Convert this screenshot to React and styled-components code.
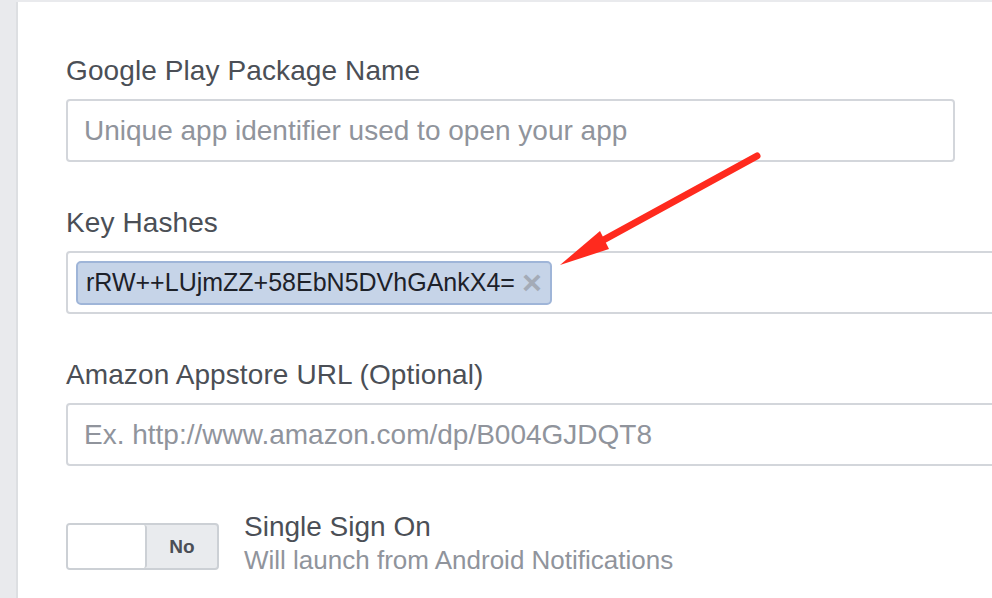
import React from "react";
import styled, { createGlobalStyle } from "styled-components";

const Global = createGlobalStyle`
  html, body { margin: 0; padding: 0; background: #e9eaed; overflow: hidden; }
  body { font-family: "Liberation Sans", Arial, sans-serif; }
  #root { width: 992px; height: 598px; overflow: hidden; }
`;

const Page = styled.div`
  display: flex;
  width: 992px;
  height: 598px;
  padding: 2px 0 0 16px;
  box-sizing: border-box;
`;

const Panel = styled.div`
  position: relative;
  flex: 1;
  background: #fff;
  border-left: 2px solid #dddfe2;
  padding: 52px 0 0 48px;
  overflow: hidden;
  display: flex;
  flex-direction: column;
  gap: 44px;
`;

const Field = styled.div`
  display: flex;
  flex-direction: column;
  gap: 11px;
`;

const Label = styled.div`
  font-size: 28px;
  line-height: 34px;
  color: #4b4f56;
  letter-spacing: 0.1px;
`;

const Input = styled.div`
  box-sizing: border-box;
  height: 63px;
  width: ${(p) => p.$w}px;
  border: 2px solid #d3d6db;
  border-radius: 4px;
  display: flex;
  align-items: center;
  padding: 0 16px;
  font-size: 28px;
  color: #90949c;
  white-space: nowrap;
`;

const TagInput = styled(Input)`
  padding: 0 8px;
`;

const Chip = styled.div`
  box-sizing: border-box;
  height: 44px;
  display: flex;
  align-items: center;
  gap: 7px;
  padding: 0 8px;
  background: #c6d4e8;
  border: 2px solid #9fb5d8;
  border-radius: 5px;
  font-size: 25px;
  color: #1d2129;
`;

const Remove = styled.span`
  color: #a4abb7;
  font-size: 34px;
  font-weight: bold;
  line-height: 1;
  margin-top: -2px;
`;

const ToggleRow = styled.div`
  display: flex;
  align-items: flex-start;
  gap: 25px;
`;

const Toggle = styled.div`
  margin-top: 13px;
  box-sizing: border-box;
  width: 153px;
  height: 47px;
  display: flex;
  border: 2px solid #ccd0d5;
  border-radius: 4px;
  overflow: hidden;
  background: #e9ebee;
`;

const Knob = styled.div`
  width: 77px;
  background: #fff;
  border-right: 2px solid #ccd0d5;
  border-radius: 0 3px 3px 0;
`;

const ToggleText = styled.div`
  flex: 1;
  display: flex;
  align-items: center;
  justify-content: center;
  font-weight: bold;
  font-size: 19px;
  color: #4b4f56;
`;

const ToggleInfo = styled.div`
  display: flex;
  flex-direction: column;
`;

const Title = styled.div`
  font-size: 28px;
  line-height: 34px;
  color: #4b4f56;
`;

const Sub = styled.div`
  font-size: 26px;
  line-height: 32px;
  color: #90949c;
`;

const ArrowSvg = styled.svg`
  position: absolute;
  left: 0;
  top: 0;
  pointer-events: none;
`;

export default function App() {
  return (
    <>
      <Global />
      <Page>
        <Panel>
          <Field>
            <Label>Google Play Package Name</Label>
            <Input $w={889}>Unique app identifier used to open your app</Input>
          </Field>
          <Field>
            <Label>Key Hashes</Label>
            <TagInput $w={1000}>
              <Chip>
                rRW++LUjmZZ+58EbN5DVhGAnkX4=
                <Remove>×</Remove>
              </Chip>
            </TagInput>
          </Field>
          <Field>
            <Label>Amazon Appstore URL (Optional)</Label>
            <Input $w={1000}>Ex. http://www.amazon.com/dp/B004GJDQT8</Input>
          </Field>
          <ToggleRow>
            <Toggle>
              <Knob />
              <ToggleText>No</ToggleText>
            </Toggle>
            <ToggleInfo>
              <Title>Single Sign On</Title>
              <Sub>Will launch from Android Notifications</Sub>
            </ToggleInfo>
          </ToggleRow>
          <ArrowSvg width="992" height="598" viewBox="18 2 992 598">
            <line x1="757" y1="156" x2="598" y2="243" stroke="#ff2a1e" strokeWidth="7" strokeLinecap="round" />
            <polygon points="560,265 600,231 609,249" fill="#ff2a1e" />
          </ArrowSvg>
        </Panel>
      </Page>
    </>
  );
}
